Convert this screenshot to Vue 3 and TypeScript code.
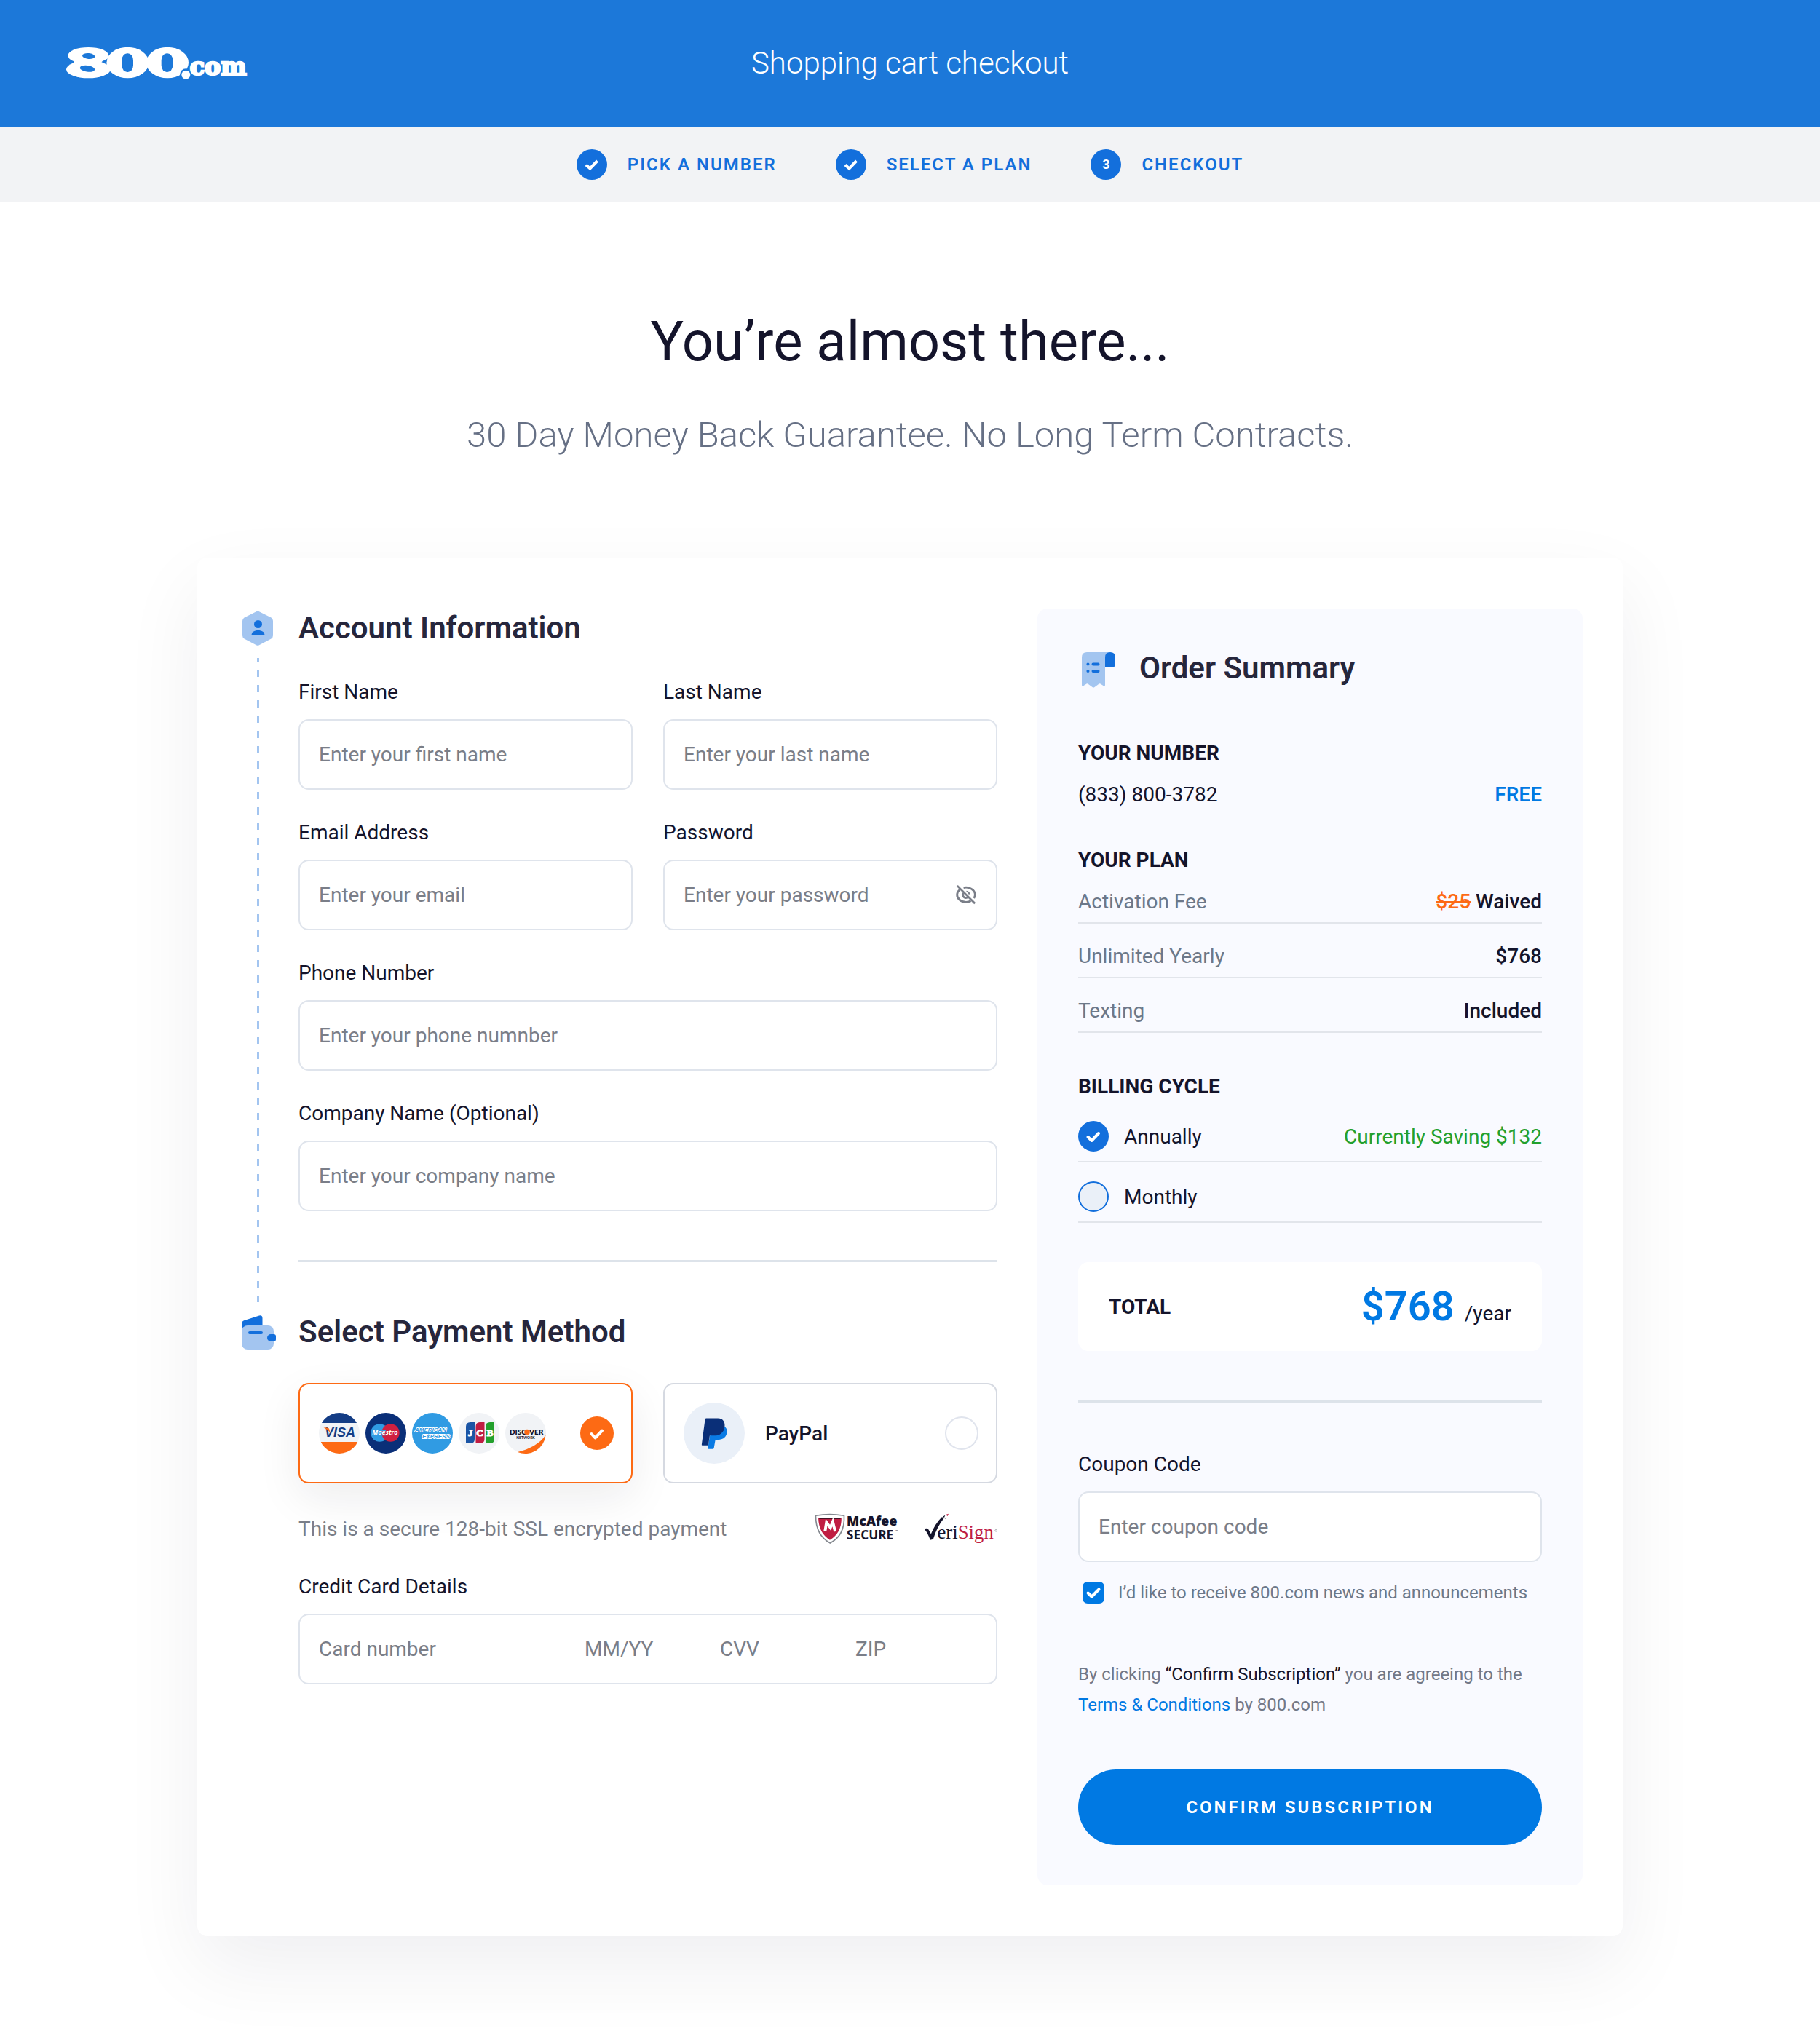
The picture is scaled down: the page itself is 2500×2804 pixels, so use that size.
<script setup lang="ts">
import { reactive, ref } from 'vue'

interface Step {
  label: string
  done: boolean
}

interface Field {
  id: string
  label: string
  placeholder: string
  type: string
  wide?: boolean
}

const steps: Step[] = [
  { label: 'PICK A NUMBER', done: true },
  { label: 'SELECT A PLAN', done: true },
  { label: 'CHECKOUT', done: false },
]

const fields: Field[] = [
  { id: 'first-name', label: 'First Name', placeholder: 'Enter your first name', type: 'text' },
  { id: 'last-name', label: 'Last Name', placeholder: 'Enter your last name', type: 'text' },
  { id: 'email', label: 'Email Address', placeholder: 'Enter your email', type: 'email' },
  { id: 'password', label: 'Password', placeholder: 'Enter your password', type: 'password' },
  { id: 'phone', label: 'Phone Number', placeholder: 'Enter your phone numnber', type: 'tel', wide: true },
  { id: 'company', label: 'Company Name (Optional)', placeholder: 'Enter your company name', type: 'text', wide: true },
]

const account = reactive<Record<string, string>>({})
const card = reactive({ number: '', expiry: '', cvv: '', zip: '' })
const payment = ref<'card' | 'paypal'>('card')
const cycle = ref<'annually' | 'monthly'>('annually')
const coupon = ref('')
const news = ref(true)
const showPassword = ref(false)

function inputType(field: Field): string {
  return field.type === 'password' && showPassword.value ? 'text' : field.type
}
</script>

<template>
  <div class="page">
    <header class="topbar">
      <a class="brand" href="#" aria-label="800.com">
        <svg width="252" height="46" viewBox="90 72 756 138" aria-hidden="true">
          <g fill="#fff">
            <ellipse cx="184" cy="109" rx="84" ry="34" />
            <ellipse cx="184" cy="166" rx="91" ry="36" />
            <rect x="125" y="120" width="114" height="36" />
            <ellipse cx="346" cy="138" rx="87" ry="64" />
            <ellipse cx="510" cy="138" rx="87" ry="64" />
          </g>
          <g fill="#1c78d9">
            <ellipse cx="185" cy="111" rx="26" ry="12" transform="rotate(5 185 111)" />
            <ellipse cx="180" cy="163" rx="31" ry="13" transform="rotate(8 180 163)" />
            <rect x="322" y="100" width="47" height="77" rx="22" ry="28" />
            <rect x="485" y="100" width="47" height="77" rx="22" ry="28" />
            <path d="M240 133 262 124 257 140Z" />
            <circle cx="586" cy="188" r="25" />
          </g>
          <circle cx="586" cy="188" r="18" fill="#fff" />
          <text class="brand-tld" x="602" y="190">com</text>
        </svg>
      </a>
      <p class="topbar-title">Shopping cart checkout</p>
    </header>

    <ol class="steps">
      <li v-for="(step, i) in steps" :key="step.label" class="step">
        <span class="step-dot">
          <svg v-if="step.done" width="42" height="42" viewBox="0 0 42 42" aria-hidden="true">
            <path d="M13 21.5 18.5 26.5 28.5 16" fill="none" stroke="#fff" stroke-width="4" />
          </svg>
          <template v-else>{{ i + 1 }}</template>
        </span>
        {{ step.label }}
      </li>
    </ol>

    <main class="main">
      <h1 class="headline">You’re almost there...</h1>
      <p class="subline">30 Day Money Back Guarantee. No Long Term Contracts.</p>

      <form class="card" @submit.prevent>
        <div class="details">
          <section class="block">
            <div class="rail">
              <svg width="48" height="54" viewBox="0 0 48 54" aria-hidden="true">
                <path
                  d="M21.500 4Q23 3.200 24.500 4L41.500 12.500Q44 14 44 17V37Q44 40 41.500 41.500L24.500 50.500Q23 51.200 21.500 50.500L4.500 41.500Q2 40 2 37V17Q2 14 4.500 12.500Z"
                  fill="#a3c5f0"
                />
                <circle cx="23.500" cy="21.500" r="5.500" fill="#136fdc" />
                <path d="M14.500 37C14.500 32 18 30 23.500 30S32.500 32 32.500 37Z" fill="#136fdc" />
              </svg>
              <span class="rail-line"></span>
            </div>
            <div class="block-body block-body-first">
              <h2 class="title">Account Information</h2>
              <div class="fields">
                <div v-for="field in fields" :key="field.id" class="field" :class="{ wide: field.wide }">
                  <label class="label" :for="field.id">{{ field.label }}</label>
                  <div class="box">
                    <input
                      :id="field.id"
                      v-model="account[field.id]"
                      class="input"
                      :type="inputType(field)"
                      :placeholder="field.placeholder"
                    />
                    <button
                      v-if="field.type === 'password'"
                      class="eye"
                      type="button"
                      aria-label="Show password"
                      @click="showPassword = !showPassword"
                    >
                      <svg width="30" height="30" viewBox="0 0 32 32" fill="none" stroke="#7a7e88" stroke-width="3" aria-hidden="true">
                        <path d="M3 2 29 28" />
                        <path d="M7 7.500C4.300 9.800 2.800 12.500 2.800 15.200C2.800 21 8.700 26 16 26C18.600 26 21 25.400 23 24.300" />
                        <path d="M12.300 4.900C21 3 29.200 8.500 29.200 15.200C29.200 17 28.600 18.800 27.500 20.300" />
                        <path d="M11.800 12.500C10 15.500 11.800 19.700 15.800 19.700C17 19.700 18 19.300 18.700 18.700" />
                        <path d="M16.500 10.300C18.800 10.600 20.500 12.300 20.800 14.500" stroke-width="2" />
                      </svg>
                    </button>
                  </div>
                </div>
              </div>
              <hr class="rule" />
            </div>
          </section>

          <section class="block">
            <div class="rail">
              <svg width="48" height="54" viewBox="0 0 48 54" aria-hidden="true">
                <path d="M1 24V15.500Q1 12.500 4 11.200L25 4.500Q29.500 3.500 29.500 8V24Z" fill="#136fdc" />
                <rect x="1" y="18" width="44" height="33" rx="8" fill="#a3c5f0" />
                <path d="M12 28H28" stroke="#136fdc" stroke-width="4" stroke-linecap="round" />
                <path d="M41 30H45Q48 30 48 33V37Q48 40 45 40H41A5 5 0 0 1 41 30Z" fill="#136fdc" />
              </svg>
            </div>
            <div class="block-body">
              <h2 class="title">Select Payment Method</h2>
              <div class="methods">
                <label class="method" :class="{ selected: payment === 'card' }">
                  <span class="logos" role="img" aria-label="Visa, Maestro, American Express, JCB, Discover">
                    <svg width="56" height="56" viewBox="0 0 56 56">
                      <clipPath id="round"><circle cx="28" cy="28" r="28" /></clipPath>
                      <g clip-path="url(#round)">
                        <rect width="56" height="56" fill="#f1f3f6" />
                        <rect width="56" height="14" fill="#143d85" />
                        <rect y="40" width="56" height="16" fill="#fd6a14" />
                      </g>
                      <text class="logo-visa" x="8" y="33">VISA</text>
                      <path d="M6.500 20.500H12Q14 20.500 14.500 23L15.500 28Q13 23 6.500 20.500Z" fill="#fd6a14" />
                    </svg>
                    <svg width="56" height="56" viewBox="0 0 56 56">
                      <circle cx="28" cy="28" r="28" fill="#0a2f78" />
                      <circle cx="19.500" cy="27.500" r="12.200" fill="#309be3" />
                      <circle cx="34.500" cy="27.500" r="12.200" fill="#d02040" />
                      <path d="M22 24.500H28M22 27.500H27M22 30.500H28" stroke="#309be3" stroke-width="1.500" />
                      <text class="logo-maestro" x="27" y="30">Maestro</text>
                    </svg>
                    <svg width="56" height="56" viewBox="0 0 56 56">
                      <circle cx="28" cy="28" r="28" fill="#309be3" />
                      <text class="logo-amex" x="4" y="26">AMERICAN</text>
                      <text class="logo-amex" x="14" y="35">EXPRESS</text>
                    </svg>
                    <svg width="56" height="56" viewBox="0 0 56 56">
                      <circle cx="28" cy="28" r="28" fill="#f1f3f6" />
                      <path d="M16 13H22V36Q22 42 16 42H10V19Q10 13 16 13Z" fill="#1b55a5" />
                      <path d="M29 13H35.500V36Q35.500 42 29 42H23.500V19Q23.500 13 29 13Z" fill="#c01d42" />
                      <path d="M43 13H49V36Q49 42 43 42H37V19Q37 13 43 13Z" fill="#23a02c" />
                      <text class="logo-jcb" x="16" y="32">J</text>
                      <text class="logo-jcb" x="29" y="32">C</text>
                      <text class="logo-jcb" x="43" y="32">B</text>
                    </svg>
                    <svg width="56" height="56" viewBox="0 0 56 56">
                      <circle cx="28" cy="28" r="28" fill="#f1f3f6" />
                      <path d="M55.500 30.500A28 28 0 0 1 17 54C33 50 47 43 55.500 30.500Z" fill="#fd6a14" />
                      <text class="logo-discover" x="6" y="30">DISC</text>
                      <circle cx="30" cy="26.500" r="3.800" fill="#fd6a14" />
                      <text class="logo-discover" x="33" y="30">VER</text>
                      <text class="logo-network" x="28" y="36">NETWORK</text>
                    </svg>
                  </span>
                  <span class="radio radio-method">
                    <input v-model="payment" type="radio" name="payment" value="card" aria-label="Credit card" />
                    <svg v-if="payment === 'card'" width="46" height="46" viewBox="0 0 46 46" aria-hidden="true">
                      <path d="M15.500 24 20.500 29.500 30 19.500" />
                    </svg>
                  </span>
                </label>

                <label class="method" :class="{ selected: payment === 'paypal' }">
                  <svg width="84" height="84" viewBox="145 140 250 250" aria-hidden="true">
                    <circle cx="270" cy="265" r="125" fill="#eaf0f8" />
                    <path
                      d="M313 238C323 246 325 256 321 268C316 285 302 292 284 292H275L269 326Q268 330 264 330H247Q243 330 244 326L254 268Z"
                      fill="#0a7be4"
                    />
                    <path
                      d="M238 204H285C305 204 315 218 313 238C310 263 293 275 270 275H252L246 315H222Q218 315 219 311L233 208Q234 204 238 204Z"
                      fill="#0a2f78"
                    />
                  </svg>
                  <span class="method-name">PayPal</span>
                  <span class="radio radio-method">
                    <input v-model="payment" type="radio" name="payment" value="paypal" aria-label="PayPal" />
                    <svg v-if="payment === 'paypal'" width="46" height="46" viewBox="0 0 46 46" aria-hidden="true">
                      <path d="M15.500 24 20.500 29.500 30 19.500" />
                    </svg>
                  </span>
                </label>
              </div>

              <div class="secure">
                <p class="secure-note">This is a secure 128-bit SSL encrypted payment</p>
                <svg width="116" height="43" viewBox="686 598 350 130" role="img" aria-label="McAfee Secure">
                  <path d="M690 608Q748 598 808 608Q812 690 750 722Q690 690 690 608Z" fill="#fff" stroke="#84888f" stroke-width="5" />
                  <path d="M701 619H797Q797 680 749 709Q703 680 701 619Z" fill="#c01d42" />
                  <path d="M705 620H793" stroke="#3a1424" stroke-width="4" />
                  <path d="M729 672 735 636 751 658 761 634 771 674" fill="none" stroke="#fff" stroke-width="12" />
                  <text class="logo-mcafee" x="819" y="650">McAfee</text>
                  <text class="logo-secure" x="819" y="707">SECURE</text>
                  <text class="logo-tm" x="1022" y="676">™</text>
                </svg>
                <svg width="101" height="43" viewBox="1138 598 304 130" role="img" aria-label="VeriSign">
                  <path
                    d="M1139 663Q1151 658 1157 666L1167 684Q1184 642 1212 614L1222 617Q1192 654 1176 706L1164 709Q1154 680 1139 663Z"
                    fill="#14142b"
                  />
                  <path d="M1216 612 1226 606 1222 616ZM1224 622 1232 613 1227 621Z" fill="#14142b" />
                  <path d="M1228 604 1240 600 1236 610Z" fill="#c01d42" />
                  <text class="logo-verisign" x="1193" y="704">eri<tspan fill="#c01d42">Sign</tspan></text>
                  <circle cx="1437" cy="670" r="4" fill="none" stroke="#84888f" stroke-width="2" />
                </svg>
              </div>

              <div class="field">
                <label class="label" for="card-number">Credit Card Details</label>
                <div class="box card-box">
                  <input id="card-number" v-model="card.number" class="input" placeholder="Card number" />
                  <input v-model="card.expiry" class="input" placeholder="MM/YY" aria-label="Expiry date" />
                  <input v-model="card.cvv" class="input" placeholder="CVV" aria-label="Security code" />
                  <input v-model="card.zip" class="input" placeholder="ZIP" aria-label="ZIP code" />
                </div>
              </div>
            </div>
          </section>
        </div>

        <aside class="summary">
          <div class="summary-head">
            <svg width="56" height="56" viewBox="0 0 56 56" aria-hidden="true">
              <path
                d="M5 13Q5 6 12 6H44L37 13V51Q37 54 34.500 52L30.500 49.500Q29 49 28 50L22.500 54Q21 55 19.500 54L14 50Q13 49 11.500 49.500L7.500 52Q5 54 5 51Z"
                fill="#a3c5f0"
              />
              <path d="M37 27V13Q37 6 44 6Q51 6 51 13V22Q51 27 46 27Z" fill="#136fdc" />
              <path d="M20.500 22.500H27.500M20.500 32H27.500M13.400 22.500H13.500M13.400 32H13.500" stroke="#136fdc" stroke-width="4" stroke-linecap="round" />
            </svg>
            <h2 class="title">Order Summary</h2>
          </div>

          <h3 class="caption">YOUR NUMBER</h3>
          <p class="pair">
            <span>(833) 800-3782</span>
            <span class="free">FREE</span>
          </p>

          <h3 class="caption spaced">YOUR PLAN</h3>
          <dl class="plan">
            <div class="plan-row">
              <dt>Activation Fee</dt>
              <dd><s class="waived">$25</s> Waived</dd>
            </div>
            <div class="plan-row">
              <dt>Unlimited Yearly</dt>
              <dd>$768</dd>
            </div>
            <div class="plan-row">
              <dt>Texting</dt>
              <dd>Included</dd>
            </div>
          </dl>

          <h3 id="cycle-caption" class="caption spaced">BILLING CYCLE</h3>
          <div class="cycles" role="radiogroup" aria-labelledby="cycle-caption">
            <label class="cycle">
              <span class="radio radio-cycle">
                <input v-model="cycle" type="radio" name="cycle" value="annually" />
                <svg v-if="cycle === 'annually'" width="42" height="42" viewBox="0 0 42 42" aria-hidden="true">
                  <path d="M13.500 22 18.500 27 28 17" />
                </svg>
              </span>
              Annually
              <span class="saving">Currently Saving $132</span>
            </label>
            <label class="cycle">
              <span class="radio radio-cycle">
                <input v-model="cycle" type="radio" name="cycle" value="monthly" />
                <svg v-if="cycle === 'monthly'" width="42" height="42" viewBox="0 0 42 42" aria-hidden="true">
                  <path d="M13.500 22 18.500 27 28 17" />
                </svg>
              </span>
              Monthly
            </label>
          </div>

          <div class="total">
            <span class="caption">TOTAL</span>
            <p class="price"><strong class="amount">$768</strong><span>/year</span></p>
          </div>

          <hr class="rule" />

          <div class="field coupon">
            <label class="label" for="coupon">Coupon Code</label>
            <div class="box">
              <input id="coupon" v-model="coupon" class="input" placeholder="Enter coupon code" />
            </div>
          </div>

          <label class="news">
            <span class="tick">
              <input v-model="news" type="checkbox" />
              <svg v-if="news" width="30" height="30" viewBox="0 0 30 30" aria-hidden="true">
                <path d="M7.500 15.500 12.500 20.500 22.500 10.500" />
              </svg>
            </span>
            I’d like to receive 800.com news and announcements
          </label>

          <p class="terms">
            By clicking <span class="ink">“Confirm Subscription”</span> you are agreeing to the
            <a href="#">Terms &amp; Conditions</a> by 800.com
          </p>

          <button class="confirm" type="submit">CONFIRM SUBSCRIPTION</button>
        </aside>
      </form>
    </main>
  </div>
</template>

<style>
body {
  margin: 0;
  background: #fff;
}
</style>

<style scoped>
.page,
.page * {
  box-sizing: border-box;
}

.page {
  font-family: Roboto, 'Liberation Sans', sans-serif;
  font-size: 28px;
  line-height: 33px;
  color: #14142b;
}

.page svg {
  display: block;
  flex: none;
  overflow: visible;
}

h1,
h2,
h3,
p,
ol,
dl,
dd {
  margin: 0;
  padding: 0;
}

input,
button {
  font: inherit;
  color: inherit;
  margin: 0;
  padding: 0;
}

.topbar {
  display: grid;
  grid-template-columns: 1fr auto 1fr;
  align-items: center;
  min-height: 174px;
  padding: 0 90px;
  background: #1c78d9;
  color: #fff;
}

.topbar-title {
  font-size: 42px;
  line-height: 48px;
  font-weight: 300;
}

.brand {
  justify-self: start;
}

.brand-tld {
  font-family: 'DejaVu Serif', serif;
  font-weight: 700;
  font-size: 100px;
  fill: #fff;
  stroke: #fff;
  stroke-width: 8px;
}

.steps {
  display: flex;
  justify-content: center;
  gap: 81px;
  min-height: 104px;
  align-items: center;
  background: #f2f3f5;
  list-style: none;
}

.step {
  display: flex;
  align-items: center;
  gap: 28px;
  font-size: 24px;
  line-height: 28px;
  font-weight: 600;
  letter-spacing: 2px;
  color: #136fdc;
}

.step-dot {
  display: grid;
  place-items: center;
  width: 42px;
  height: 42px;
  border-radius: 50%;
  background: #136fdc;
  color: #fff;
  font-size: 18px;
  letter-spacing: 0;
}

.main {
  padding: 146px 60px 143px;
}

.headline {
  font-size: 76px;
  line-height: 90px;
  font-weight: 400;
  text-align: center;
}

.subline {
  margin-top: 56px;
  font-size: 49px;
  line-height: 56px;
  font-weight: 300;
  text-align: center;
  color: #667085;
}

.card {
  display: grid;
  grid-template-columns: minmax(0, 1039fr) minmax(0, 749fr);
  gap: 55px;
  max-width: 1958px;
  margin: 140px auto 0;
  padding: 70px 55px 70px 60px;
  border-radius: 14px;
  background: #fff;
  box-shadow: 0 42px 110px rgba(20, 20, 43, 0.065);
}

.block {
  display: grid;
  grid-template-columns: 48px minmax(0, 1fr);
  column-gap: 31px;
}

.rail {
  display: flex;
  flex-direction: column;
}

.rail-line {
  flex: 1;
  width: 3px;
  margin: 14px 22px;
  background: repeating-linear-gradient(#a3c5f0 0 5px, transparent 5px 16px, #a3c5f0 16px 21px);
}

.block-body-first {
  padding-bottom: 69px;
}

.title {
  font-size: 42px;
  line-height: 54px;
  font-weight: 600;
  color: #26263c;
}

.fields {
  display: grid;
  grid-template-columns: 1fr 1fr;
  gap: 42px;
  margin: 44px 0 67px;
}

.field {
  display: flex;
  flex-direction: column;
  gap: 21px;
}

.wide {
  grid-column: 1 / -1;
}

.box {
  display: flex;
  align-items: center;
  height: 97px;
  padding: 0 26px;
  border: 2px solid #dfe4ec;
  border-radius: 14px;
  background: #fff;
}

.card-box {
  display: grid;
  grid-template-columns: 365fr 186fr 186fr 167fr;
}

.input {
  flex: 1;
  width: 100%;
  min-width: 0;
  border: 0;
  outline: 0;
  background: transparent;
}

.input::placeholder {
  color: #7a7e88;
  opacity: 1;
}

.eye {
  border: 0;
  background: none;
  cursor: pointer;
}

.rule {
  height: 3px;
  margin: 0;
  border: 0;
  background: #dde3ea;
}

.methods {
  display: grid;
  grid-template-columns: 1fr 1fr;
  gap: 42px;
  margin-top: 43px;
}

.method {
  display: flex;
  align-items: center;
  gap: 28px;
  height: 138px;
  padding: 0 24px 0 26px;
  border: 2px solid #d5d9e1;
  border-radius: 14px;
  background: #fff;
  cursor: pointer;
}

.method.selected {
  border-color: #fd6a14;
  box-shadow: 0 20px 60px rgba(20, 20, 43, 0.08);
}

.method-name {
  font-weight: 500;
}

.logos {
  display: flex;
  gap: 8px;
}

.logo-visa {
  font: italic 700 18px 'Liberation Sans', sans-serif;
  fill: #143d85;
}

.logo-maestro {
  font: italic 700 9px 'Open Sans', sans-serif;
  text-anchor: middle;
  fill: #fff;
}

.logo-amex {
  font: italic 700 8px 'Liberation Sans', sans-serif;
  fill: #309be3;
  stroke: #fff;
  stroke-width: 2px;
  stroke-linejoin: round;
  paint-order: stroke;
}

.logo-jcb {
  font: 700 13px 'Liberation Serif', serif;
  text-anchor: middle;
  fill: #fff;
  stroke: #fff;
  stroke-width: 1px;
}

.logo-discover {
  font: 800 10px Lato, sans-serif;
  fill: #14142b;
}

.logo-network {
  font: 700 5px Lato, sans-serif;
  text-anchor: middle;
  fill: #14142b;
}

.logo-mcafee {
  font: 800 54px 'Open Sans', sans-serif;
  fill: #14142b;
}

.logo-secure {
  font: 700 52px 'Open Sans', sans-serif;
  fill: #14142b;
}

.logo-tm {
  font: 400 12px 'Open Sans', sans-serif;
  fill: #14142b;
}

.logo-verisign {
  font: 400 81px 'Liberation Serif', serif;
  fill: #14142b;
}

.radio,
.tick {
  display: grid;
  flex: none;
}

.radio > *,
.tick > * {
  grid-area: 1 / 1;
}

.radio input,
.tick input {
  appearance: none;
  cursor: pointer;
}

.radio svg,
.tick svg {
  pointer-events: none;
  fill: none;
  stroke: #fff;
  stroke-width: 4px;
  stroke-linecap: round;
  stroke-linejoin: round;
}

.radio input {
  border-radius: 50%;
}

.radio-method {
  margin-left: auto;
}

.radio-method input {
  width: 46px;
  height: 46px;
  border: 2px solid #e0e4ed;
  background: #fff;
}

.radio-method input:checked {
  border-color: #fd6a14;
  background: #fd6a14;
}

.radio-cycle input {
  width: 42px;
  height: 42px;
  border: 2px solid #136fdc;
  background: #eaf0f8;
}

.radio-cycle input:checked {
  background: #136fdc;
}

.secure {
  display: flex;
  align-items: center;
  gap: 34px;
  height: 43px;
  margin: 41px 0;
}

.secure-note {
  flex: 1;
  color: #7a7e88;
}

.summary {
  padding: 54px 56px 55px;
  border-radius: 14px;
  background: #f9faff;
}

.summary-head {
  display: flex;
  align-items: center;
  gap: 28px;
  margin-bottom: 72px;
}

.caption {
  font-size: 28px;
  line-height: 33px;
  font-weight: 700;
}

.spaced {
  margin-top: 57px;
}

.pair {
  display: flex;
  justify-content: space-between;
  margin-top: 24px;
}

.free {
  font-weight: 500;
  color: #0079e3;
}

.plan {
  display: flex;
  flex-direction: column;
  gap: 28px;
  margin-top: 24px;
}

.plan-row {
  display: flex;
  justify-content: space-between;
  padding-bottom: 12px;
  border-bottom: 2px solid #e2e5eb;
}

.plan-row dt {
  color: #6c7889;
}

.plan-row dd {
  font-weight: 500;
}

.waived {
  color: #fd6a14;
}

.cycles {
  display: flex;
  flex-direction: column;
  gap: 26px;
  margin-top: 31px;
}

.cycle {
  display: flex;
  align-items: center;
  gap: 21px;
  padding-bottom: 13px;
  border-bottom: 2px solid #e2e5eb;
  cursor: pointer;
}

.saving {
  margin-left: auto;
  color: #23a02c;
}

.total {
  display: flex;
  align-items: center;
  justify-content: space-between;
  height: 122px;
  margin: 54px 0 68px;
  padding: 0 42px;
  border-radius: 14px;
  background: #fff;
}

.price {
  display: flex;
  align-items: baseline;
  gap: 14px;
}

.amount {
  font-size: 56px;
  line-height: 66px;
  font-weight: 600;
  color: #0079e3;
}

.coupon {
  margin-top: 68px;
}

.news {
  display: flex;
  align-items: center;
  gap: 19px;
  margin: 27px 0 0 6px;
  font-size: 24px;
  line-height: 30px;
  color: #6c7889;
  cursor: pointer;
}

.tick input {
  width: 30px;
  height: 30px;
  border: 2px solid #0079e3;
  border-radius: 7px;
}

.tick input:checked {
  background: #0079e3;
}

.terms {
  margin-top: 76px;
  font-size: 24px;
  line-height: 42px;
  color: #727887;
}

.terms a {
  color: #0079e3;
  text-decoration: none;
}

.ink {
  color: #14142b;
}

.confirm {
  display: block;
  width: 100%;
  height: 104px;
  margin-top: 68px;
  border: 0;
  border-radius: 52px;
  background: #0079e3;
  color: #fff;
  font-size: 24px;
  line-height: 28px;
  font-weight: 600;
  letter-spacing: 3px;
  cursor: pointer;
}
</style>
